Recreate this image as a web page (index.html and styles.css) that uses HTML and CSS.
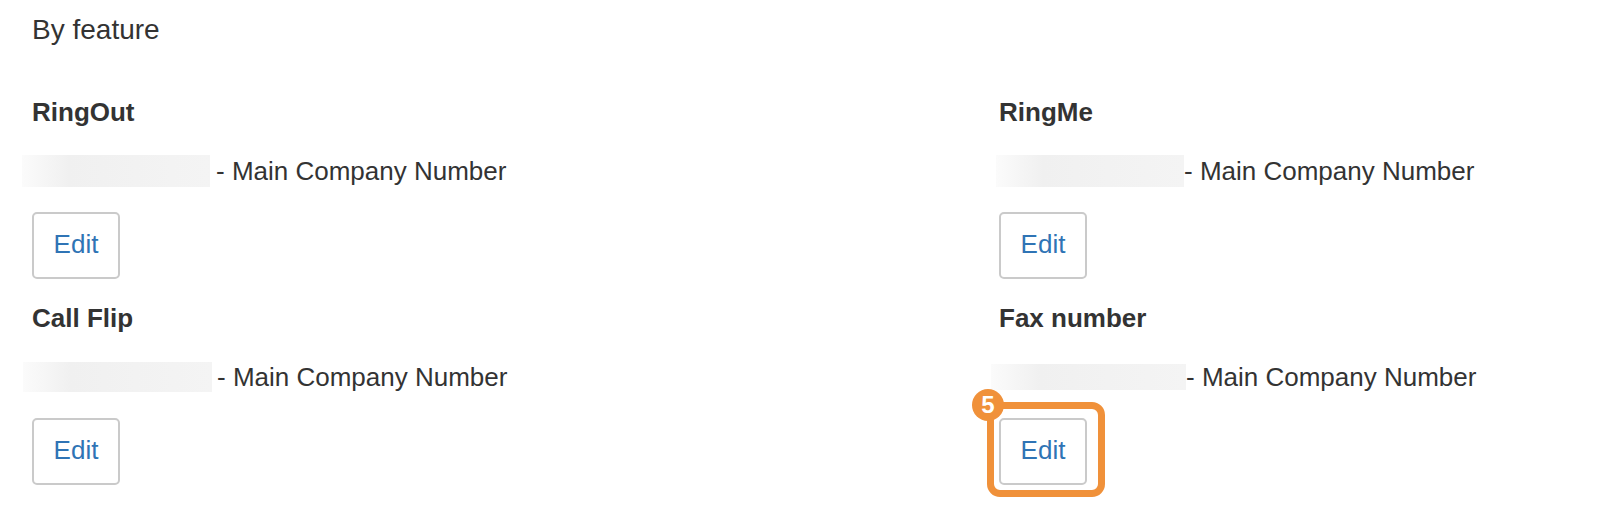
FILE: index.html
```html
<!DOCTYPE html>
<html lang="en">
<head>
<meta charset="utf-8">
<title>By feature</title>
<link rel="stylesheet" href="styles.css">
</head>
<body>
<div class="page">
  <div class="section-title">By feature</div>
  <div class="features">
    <div class="feature">
      <div class="feature-name">RingOut</div>
      <div class="number-line">
        <span class="blur blur-l1"></span><span class="number-label">- Main Company Number</span>
      </div>
      <button class="edit-btn" type="button">Edit</button>
    </div>
    <div class="feature">
      <div class="feature-name">RingMe</div>
      <div class="number-line">
        <span class="blur blur-r1"></span><span class="number-label">- Main Company Number</span>
      </div>
      <button class="edit-btn" type="button">Edit</button>
    </div>
    <div class="feature">
      <div class="feature-name">Call Flip</div>
      <div class="number-line">
        <span class="blur blur-l2"></span><span class="number-label">- Main Company Number</span>
      </div>
      <button class="edit-btn" type="button">Edit</button>
    </div>
    <div class="feature">
      <div class="feature-name">Fax number</div>
      <div class="number-line">
        <span class="blur blur-r2"></span><span class="number-label">- Main Company Number</span>
      </div>
      <div class="highlight-wrap">
        <button class="edit-btn" type="button">Edit</button>
        <div class="highlight"><span class="badge">5</span></div>
      </div>
    </div>
  </div>
</div>
</body>
</html>
```

FILE: styles.css
```css
* { box-sizing: border-box; }

html, body {
  margin: 0;
  padding: 0;
  background: #ffffff;
}

body {
  font-family: "Liberation Sans", Arial, sans-serif;
  color: #333333;
  min-height: 510px;
}

.page {
  padding: 14px 32px 30px 32px;
}

.section-title {
  font-size: 28px;
  line-height: 32px;
  height: 32px;
}

.features {
  margin-top: 51px;
  display: grid;
  grid-template-columns: 967px 1fr;
  row-gap: 24px;
}

.feature {
  display: flex;
  flex-direction: column;
  align-items: flex-start;
}

.feature-name {
  font-size: 26px;
  font-weight: bold;
  line-height: 30px;
  height: 30px;
  margin-bottom: 28px;
}

.number-line {
  display: flex;
  align-items: center;
  height: 32px;
  margin-bottom: 25px;
  font-size: 26px;
  line-height: 32px;
  white-space: nowrap;
}

.blur {
  display: block;
  height: 32px;
  width: 188px;
  background: linear-gradient(to right, #fbfbfb 0%, #f0f0f0 25%, #f2f2f2 60%, #f4f4f4 100%);
}

.blur-l1 { margin-left: -10px; margin-right: 6px; }
.blur-l2 { margin-left: -9px; width: 189px; margin-right: 5px; height: 30px; }
.blur-r1 { margin-left: -3px; margin-right: 0; }
.blur-r2 { margin-left: -8px; width: 195px; margin-right: 0; height: 26px; }

.edit-btn {
  display: block;
  width: 88px;
  height: 67px;
  padding: 0 0 3px 0;
  border: 2px solid #cacaca;
  border-radius: 5px;
  background: #ffffff;
  color: #2f74b5;
  font-family: "Liberation Sans", Arial, sans-serif;
  font-size: 26px;
  line-height: 1;
  cursor: pointer;
}

.highlight-wrap {
  position: relative;
}

.highlight {
  position: absolute;
  left: -12px;
  top: -16px;
  width: 118px;
  height: 95px;
  border: 7px solid #f0913a;
  border-radius: 13px;
  pointer-events: none;
}

.badge {
  position: absolute;
  left: -22px;
  top: -20px;
  width: 32px;
  height: 32px;
  border-radius: 50%;
  background: #f0913a;
  color: #ffffff;
  font-family: "Liberation Sans", Arial, sans-serif;
  font-weight: bold;
  font-size: 24px;
  line-height: 32px;
  text-align: center;
}
```
